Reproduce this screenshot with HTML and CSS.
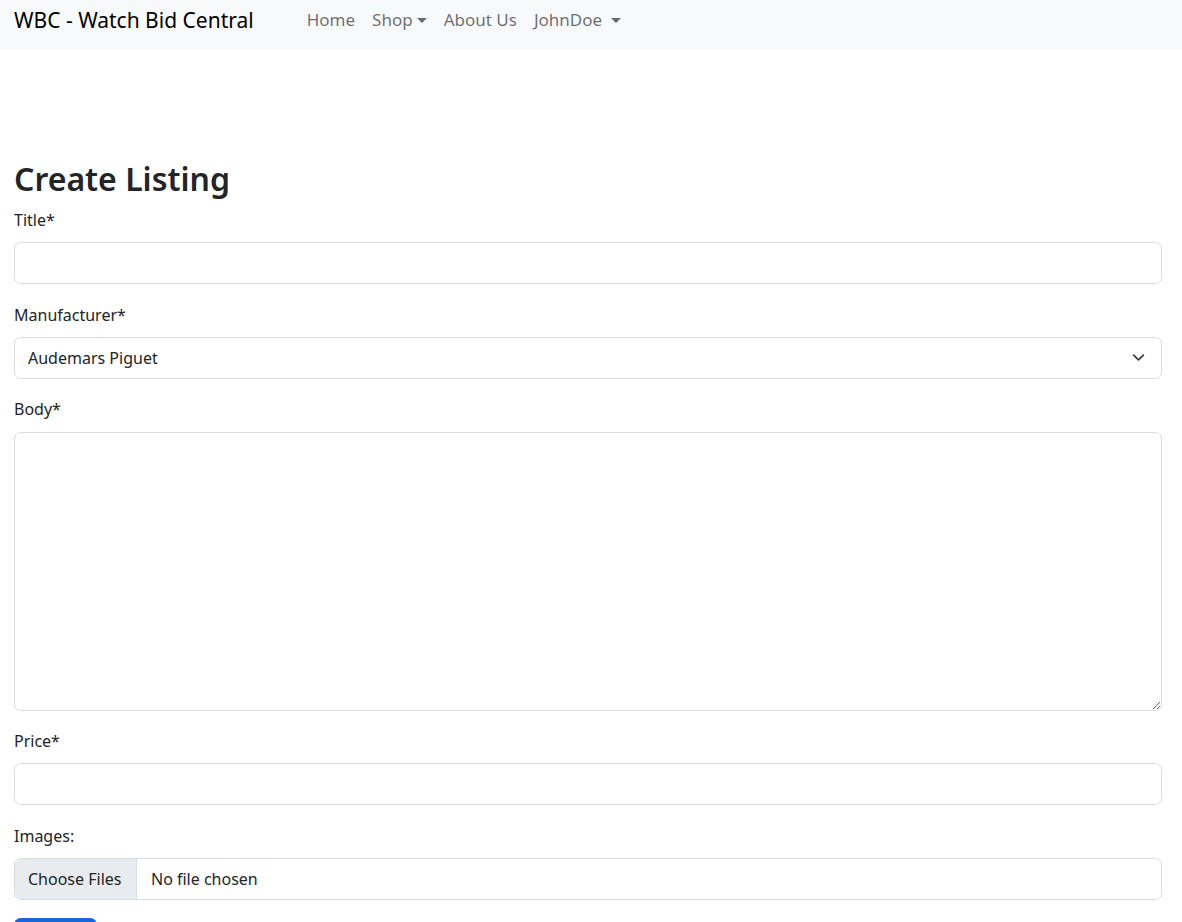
FILE: index.html
```html
<!DOCTYPE html>
<html lang="en">
<head>
<meta charset="utf-8">
<title>Create Listing - WBC</title>
<link rel="stylesheet" href="styles.css">
</head>
<body>
<nav class="navbar">
  <a class="brand" href="#">WBC - Watch Bid Central</a>
  <ul class="nav">
    <li><a class="nav-link" href="#">Home</a></li>
    <li><a class="nav-link dropdown" href="#">Shop</a></li>
    <li><a class="nav-link" href="#">About Us</a></li>
    <li><a class="nav-link dropdown user" href="#">JohnDoe</a></li>
  </ul>
</nav>
<main class="container">
  <h1 class="title">Create Listing</h1>
  <form class="form">
    <div class="field">
      <label class="label" for="title">Title*</label>
      <input class="control" id="title" type="text">
    </div>
    <div class="field">
      <label class="label" for="manufacturer">Manufacturer*</label>
      <select class="control select" id="manufacturer">
        <option>Audemars Piguet</option>
        <option>Rolex</option>
        <option>Omega</option>
      </select>
    </div>
    <div class="field">
      <label class="label" for="body">Body*</label>
      <textarea class="control textarea" id="body"></textarea>
    </div>
    <div class="field">
      <label class="label" for="price">Price*</label>
      <input class="control" id="price" type="text">
    </div>
    <div class="field">
      <label class="label" for="images">Images:</label>
      <input class="control file" id="images" type="file" multiple>
    </div>
    <button class="btn" type="submit">Submit</button>
  </form>
</main>
</body>
</html>
```
FILE: styles.css
```css
* { box-sizing: border-box; }
html, body { margin: 0; padding: 0; }
body {
  font-family: "Noto Sans", "Open Sans", sans-serif;
  font-size: 16px;
  line-height: 26.4px;
  color: #212529;
  background: #fff;
}
.navbar {
  height: 50px;
  background: #f8f9fa;
  display: flex;
  align-items: center;
  padding: 0 14px;
}
.brand {
  font-size: 21px;
  color: #000;
  text-decoration: none;
  margin-right: 53px;
  margin-top: -9px;
}
.nav {
  list-style: none;
  margin: -9px 0 0;
  padding: 0;
  display: flex;
  gap: 17px;
}
.nav-link {
  color: rgba(0,0,0,.58);
  text-decoration: none;
  font-size: 17px;
}
.dropdown::after {
  content: "";
  display: inline-block;
  margin-left: 4px;
  vertical-align: 3px;
  border-top: 5px solid;
  border-left: 5px solid transparent;
  border-right: 5px solid transparent;
}
.user::after { margin-left: 9px; }
.container {
  padding: 109.6px 20px 0 14px;
}
.title {
  font-size: 32px;
  font-weight: 600;
  line-height: 38.4px;
  margin: 0 0 8.8px;
}
.form { display: block; }
.field { margin-bottom: 17.6px; }
.label {
  display: block;
  margin-bottom: 8.8px;
}
.control {
  display: block;
  width: 100%;
  height: 42px;
  padding: 6px 13px;
  font: inherit;
  color: #212529;
  background: #fff;
  border: 1px solid #d9dcdf;
  border-radius: 6.6px;
}
.select {
  appearance: none;
  -webkit-appearance: none;
  padding-right: 45px;
  background-image: url("data:image/svg+xml,%3csvg xmlns='http://www.w3.org/2000/svg' viewBox='0 0 16 16'%3e%3cpath fill='none' stroke='%23343a40' stroke-linecap='round' stroke-linejoin='round' stroke-width='2' d='m2 5 6 6 6-6'/%3e%3c/svg%3e");
  background-repeat: no-repeat;
  background-position: right 14px center;
  background-size: 17px 13px;
}
.textarea {
  height: 279px;
  resize: vertical;
}
.file {
  padding: 6px 13px;
  overflow: hidden;
}
.file::file-selector-button {
  font: inherit;
  color: #212529;
  background: #e9ecef;
  border: 0;
  border-right: 1px solid #d9dcdf;
  border-radius: 0;
  padding: 6px 14.5px 6px 13px;
  margin: -6px 14px -6px -13px;
  height: 40px;
}
.btn {
  display: inline-block;
  font: inherit;
  color: #fff;
  background: #1a66d8;
  border: 1px solid #1a66d8;
  border-radius: 6.6px;
  padding: 6px 13px;
  width: 83px;
  margin-top: 0;
}
```
